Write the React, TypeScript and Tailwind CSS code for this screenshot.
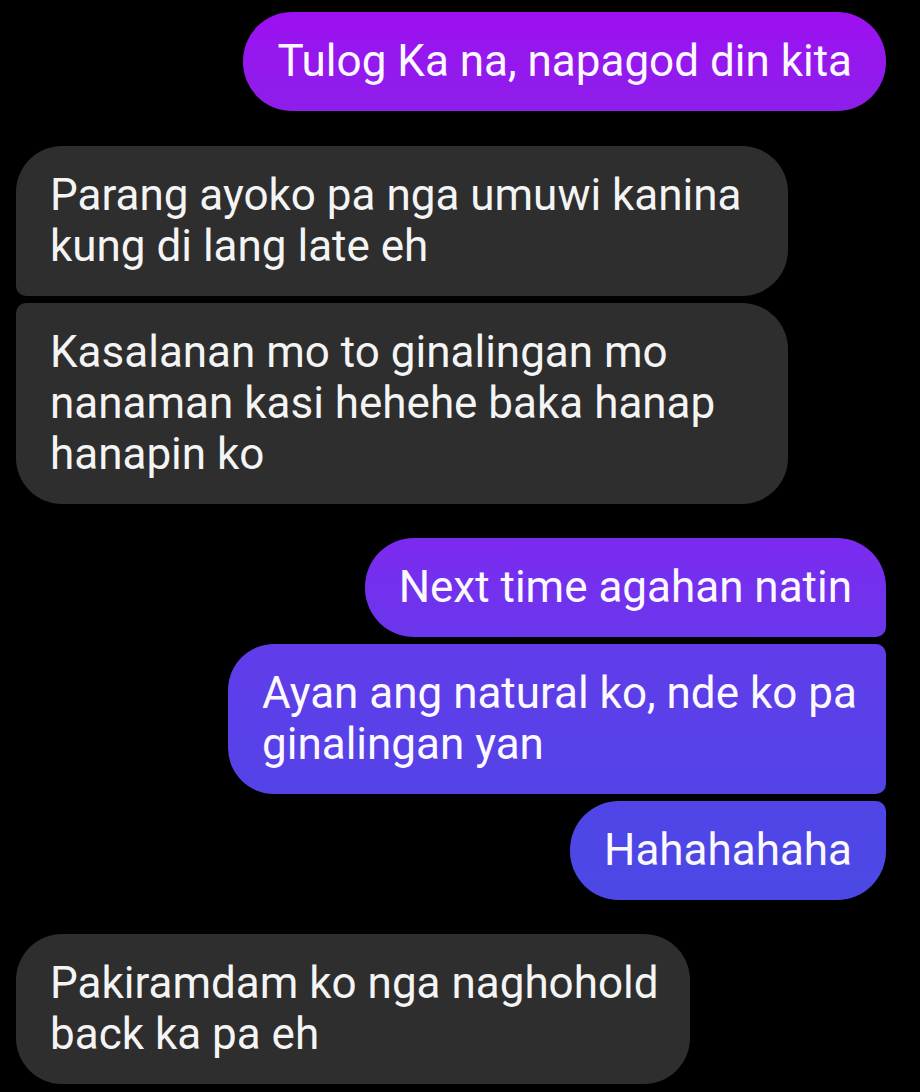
const font = { fontFamily: 'Roboto, "Noto Sans", sans-serif' };

type Msg = {
  lines: string[];
  side: 'left' | 'right';
  cls: string;
};

const messages: Msg[] = [
  {
    lines: ['Tulog Ka na, napagod din kita'],
    side: 'right',
    cls: 'rounded-[49px] bg-linear-to-b from-[#9d0ff1] to-[#8d1eea]',
  },
  {
    lines: ['Parang ayoko pa nga umuwi kanina', 'kung di lang late eh'],
    side: 'left',
    cls: 'mt-[35px] w-[772px] rounded-[46px] rounded-bl-[10px]',
  },
  {
    lines: ['Kasalanan mo to ginalingan mo', 'nanaman kasi hehehe baka hanap', 'hanapin ko'],
    side: 'left',
    cls: 'mt-[7px] w-[772px] rounded-[46px] rounded-tl-[10px]',
  },
  {
    lines: ['Next time agahan natin'],
    side: 'right',
    cls: 'mt-[34px] rounded-[49px] rounded-br-[10px] bg-linear-to-b from-[#7c2af0] to-[#6a36ec]',
  },
  {
    lines: ['Ayan ang natural ko, nde ko pa', 'ginalingan yan'],
    side: 'right',
    cls: 'mt-[7px] w-[658px] rounded-l-[46px] rounded-r-[10px] bg-linear-to-b from-[#613cea] to-[#5343e7]',
  },
  {
    lines: ['Hahahahaha'],
    side: 'right',
    cls: 'mt-[7px] rounded-[49px] rounded-tr-[10px] bg-linear-to-b from-[#5045e7] to-[#4b48e5]',
  },
  {
    lines: ['Pakiramdam ko nga naghohold', 'back ka pa eh'],
    side: 'left',
    cls: 'mt-[34px] w-[674px] rounded-[46px]',
  },
];

function Bubble({ msg }: { msg: Msg }) {
  const base =
    msg.side === 'right'
      ? 'self-end text-[#fbf9ff]'
      : 'self-start bg-[#2e2e2e] text-[#f4f4f4]';
  return (
    <div className={`${base} ${msg.cls} px-[34px] py-6 text-[44px] leading-[51px]`}>
      {msg.lines.map((line, i) => (
        <div key={i} className="whitespace-nowrap">
          {line}
        </div>
      ))}
    </div>
  );
}

export default function App() {
  return (
    <div style={font} className="min-h-[1092px] w-[920px] bg-black pt-3 pl-4 pr-[34px]">
      <div className="flex flex-col">
        {messages.map((m, i) => (
          <Bubble key={i} msg={m} />
        ))}
      </div>
    </div>
  );
}
